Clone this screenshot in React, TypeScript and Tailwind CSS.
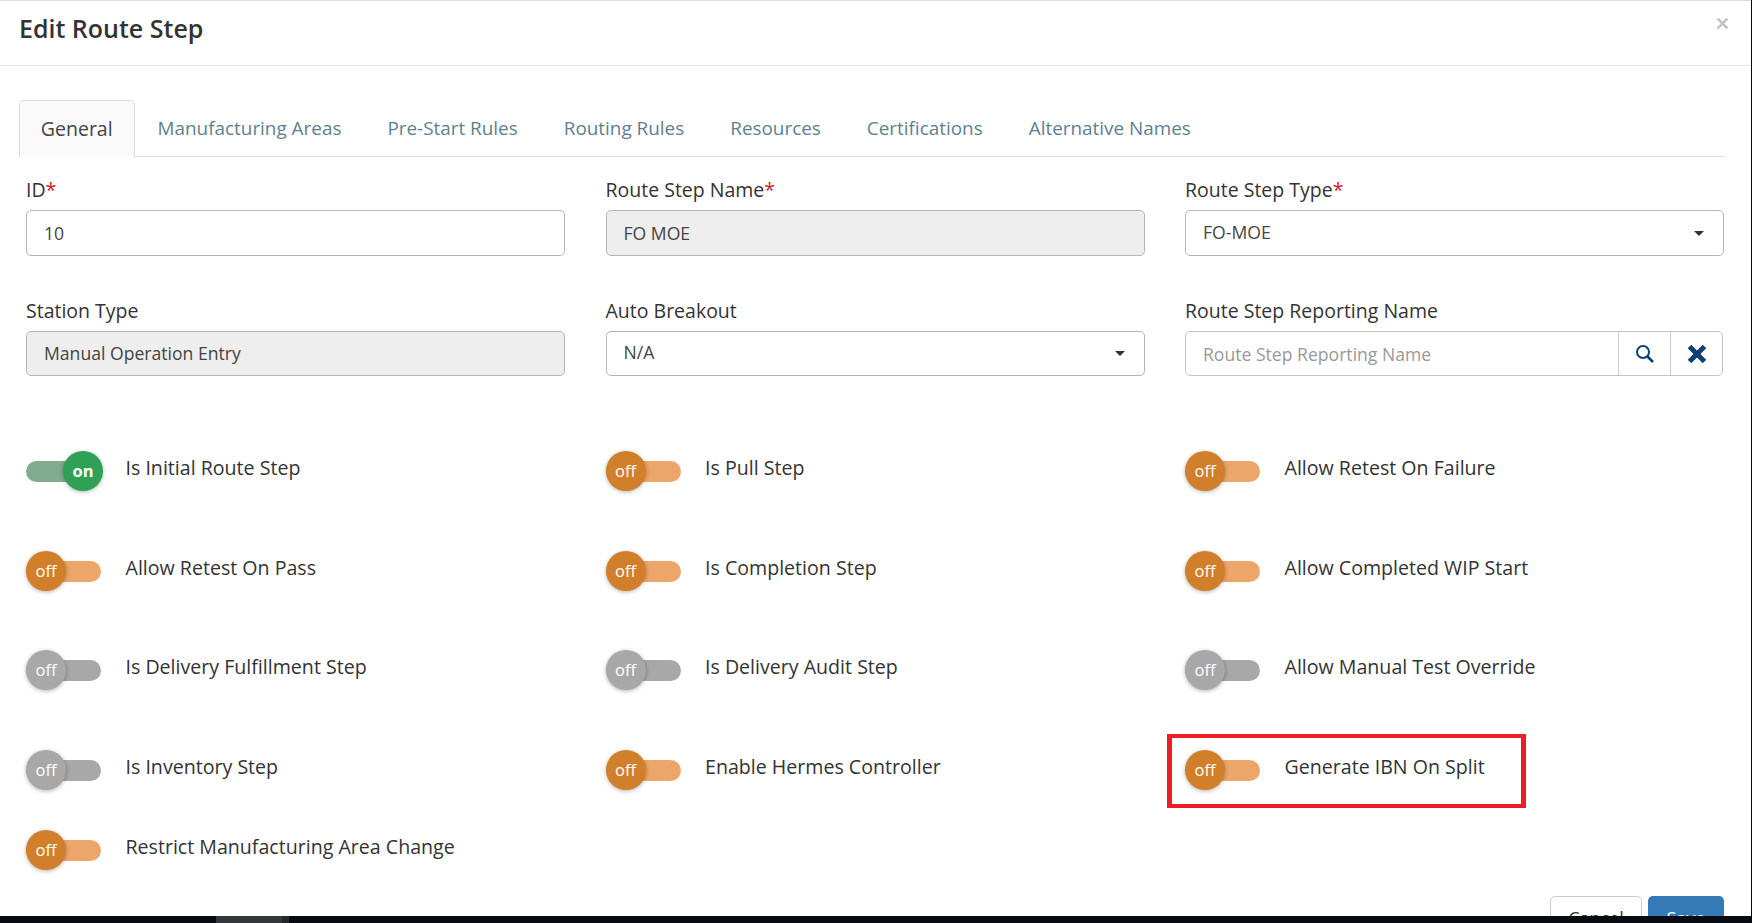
import React from 'react';

type ToggleState = 'on' | 'off' | 'disabled';

interface ToggleItem {
  label: string;
  state: ToggleState;
  highlighted?: boolean;
}

const toggles: ToggleItem[] = [
  { label: 'Is Initial Route Step', state: 'on' },
  { label: 'Is Pull Step', state: 'off' },
  { label: 'Allow Retest On Failure', state: 'off' },
  { label: 'Allow Retest On Pass', state: 'off' },
  { label: 'Is Completion Step', state: 'off' },
  { label: 'Allow Completed WIP Start', state: 'off' },
  { label: 'Is Delivery Fulfillment Step', state: 'disabled' },
  { label: 'Is Delivery Audit Step', state: 'disabled' },
  { label: 'Allow Manual Test Override', state: 'disabled' },
  { label: 'Is Inventory Step', state: 'disabled' },
  { label: 'Enable Hermes Controller', state: 'off' },
  { label: 'Generate IBN On Split', state: 'off', highlighted: true },
  { label: 'Restrict Manufacturing Area Change', state: 'off' },
];

const tabs = ['Manufacturing Areas', 'Pre-Start Rules', 'Routing Rules', 'Resources', 'Certifications', 'Alternative Names'];

function Field({ label, required, children }: { label: string; required?: boolean; children: React.ReactNode }) {
  return (
    <div className="flex flex-col">
      <div className="h-[36px] pt-[4px] text-[19.5px] leading-[24px] text-[#333333]">
        {label}
        {required && <span className="text-[#d0191f]">*</span>}
      </div>
      {children}
    </div>
  );
}

function TextBox({ value, disabled, select, short }: { value: string; disabled?: boolean; select?: boolean; short?: boolean }) {
  return (
    <div
      className={`flex items-center justify-between rounded-[5px] border border-[#b5b5b5] pl-[17px] pr-[19px] text-[17.6px] text-[#444444] ${
        short ? 'h-[45px]' : 'h-[46px]'
      } ${disabled ? 'bg-[#eeeeee]' : 'bg-white'}`}
    >
      <span className={select ? 'mb-[2px]' : ''}>{value}</span>
      {select && <span className="h-0 w-0 border-x-[5px] border-t-[5px] border-x-transparent border-t-[#333333]" />}
    </div>
  );
}

function Toggle({ item }: { item: ToggleItem }) {
  const on = item.state === 'on';
  const track = on ? 'bg-[#83ab90]' : item.state === 'off' ? 'bg-[#eca66a]' : 'bg-[#a8a8a8]';
  const knob = on ? 'bg-[#2fa055] font-bold -mr-[2px]' : item.state === 'off' ? 'bg-[#d17f2a]' : 'bg-[#a8a8a8]';
  return (
    <div className="relative flex h-[40px] items-center">
      <div className={`flex h-[21px] w-[75px] items-center rounded-full ${track} ${on ? 'justify-end' : 'justify-start'}`}>
        <div
          className={`flex h-[40px] w-[40px] shrink-0 items-center justify-center rounded-full text-[16.5px] text-white shadow-[0_1px_4px_rgba(0,0,0,0.3)] ${knob}`}
        >
          {on ? 'on' : 'off'}
        </div>
      </div>
      <span className="mb-[6px] ml-[24.5px] text-[19.6px] leading-[24px] text-[#333333]">{item.label}</span>
      {item.highlighted && (
        <div className="absolute -left-[18px] -top-[16px] h-[74px] w-[359px] border-x-[5px] border-y-[4px] border-[#ee1c25]" />
      )}
    </div>
  );
}

export default function App() {
  return (
    <div
      className="flex h-[923px] w-[1752px] flex-col overflow-hidden bg-[#090b13]"
      style={{ fontFamily: '"Open Sans", sans-serif' }}
    >
      <div className="relative mr-[1px] h-[916px] overflow-hidden border-t border-t-[#dddddd] bg-white pt-px">
        <div className="flex h-[64px] items-start justify-between border-b border-[#e5e5e5] pl-[19px] pr-[22px]">
          <h1 className="mt-[10px] text-[25px] font-semibold leading-[32px] text-[#333333]">Edit Route Step</h1>
          <svg className="mt-[15px]" width="13" height="13" viewBox="0 0 12 12">
            <path d="M1.5 1.5 L10.5 10.5 M10.5 1.5 L1.5 10.5" stroke="#c4c4c4" strokeWidth="2.6" />
          </svg>
        </div>

        <div className="mx-[19px] mt-[34px] flex h-[57px] w-[1705px] border-b border-[#dddddd]">
          <div className="flex h-[57px] w-[115.5px] items-center justify-center rounded-t-[5px] border border-b-0 border-[#dddddd] bg-[#fafafa] text-[19.5px] text-[#444444]">
            General
          </div>
          {tabs.map(t => (
            <div key={t} className="flex items-center px-[23px] text-[18.9px] text-[#5f7f92]">
              {t}
            </div>
          ))}
        </div>

        <div className="ml-[26px] mr-[27px] mt-[17px] grid grid-cols-3 gap-x-[40.5px] gap-y-[39px]">
          <Field label="ID" required>
            <TextBox value="10" />
          </Field>
          <Field label="Route Step Name" required>
            <TextBox value="FO MOE" disabled />
          </Field>
          <Field label="Route Step Type" required>
            <TextBox value="FO-MOE" select />
          </Field>
          <Field label="Station Type">
            <TextBox value="Manual Operation Entry" disabled short />
          </Field>
          <Field label="Auto Breakout">
            <TextBox value="N/A" select short />
          </Field>
          <Field label="Route Step Reporting Name">
            <div className="mr-[1px] flex h-[45px] items-stretch rounded-[5px] border border-[#c4c4c4] bg-white">
              <div className="flex flex-1 items-center pl-[17px] pt-[2px] text-[17.6px] text-[#999999]">Route Step Reporting Name</div>
              <div className="flex w-[52px] items-center justify-center border-l border-[#cccccc]">
                <svg width="22" height="22" viewBox="0 0 22 22" fill="none" stroke="#0f4073">
                  <circle cx="9" cy="9" r="6" strokeWidth="2" />
                  <path d="M13.5 13.5 L19 19" strokeWidth="2.6" />
                </svg>
              </div>
              <div className="flex w-[52px] items-center justify-center border-l border-[#cccccc]">
                <svg width="20" height="20" viewBox="0 0 20 20" fill="none" stroke="#0f4073">
                  <path d="M2.5 2.5 L17.5 17.5 M17.5 2.5 L2.5 17.5" strokeWidth="5" />
                </svg>
              </div>
            </div>
          </Field>
        </div>

        <div className="ml-[26px] mr-[27px] mt-[75px] grid grid-cols-3 grid-rows-[100px_99px_100px_80px_40px] items-start gap-x-[40.5px]">
          {toggles.map(item => (
            <Toggle key={item.label} item={item} />
          ))}
        </div>

        <div className="mr-[27px] mt-[26px] flex justify-end gap-[6px]">
          <div className="flex h-[44px] w-[92px] items-center justify-center rounded-[5px] border border-[#cccccc] bg-white text-[18px] text-[#333333]">
            Cancel
          </div>
          <div className="flex h-[44px] w-[76px] items-center justify-center rounded-[5px] bg-[#337ab7] text-[18px] text-white">
            Save
          </div>
        </div>
      </div>
      <div className="ml-[216px] flex h-[7px] w-[73px]">
        <div className="w-[66px] bg-[#35373d]" />
        <div className="w-[7px] bg-[#26282e]" />
      </div>
    </div>
  );
}
